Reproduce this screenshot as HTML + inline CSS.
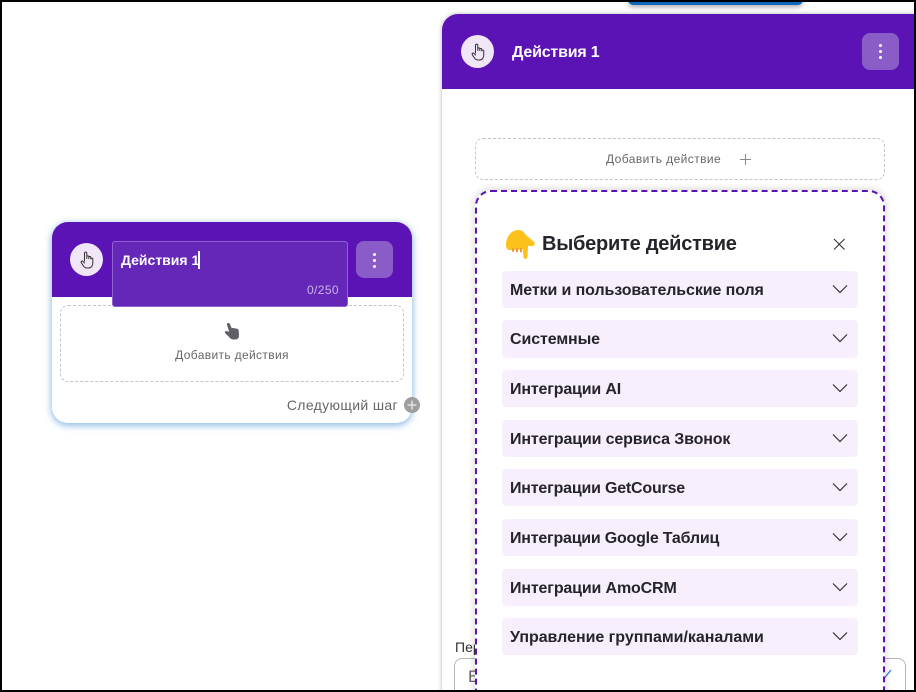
<!DOCTYPE html>
<html><head><meta charset="utf-8">
<style>
*{box-sizing:border-box;margin:0;padding:0}
html,body{width:916px;height:692px;overflow:hidden;background:#fff;font-family:"Liberation Sans",sans-serif}
.a{position:absolute}
#root{position:relative;width:916px;height:692px;overflow:hidden;background:#fff}
.frame{position:absolute;left:0;top:0;width:916px;height:692px;border:2px solid #000;pointer-events:none;z-index:50}
.circ{position:absolute;width:33px;height:33px;border-radius:50%;background:#f0e6f8}
.menu{position:absolute;width:37px;height:37px;border-radius:8px;background:#8a5cc7}
.menu i{position:absolute;left:17px;width:3px;height:3px;border-radius:50%;background:#fff}
.row{position:absolute;left:502px;width:356px;height:37px;background:#f7f0fc;border-radius:4px;font-weight:bold;font-size:16px;line-height:39px;letter-spacing:-.1px;padding-left:8px;color:#26242b;z-index:12;white-space:nowrap;overflow:hidden}
.row svg{position:absolute;left:329px;top:13px}
</style></head><body><div id="root">

<div class="a" style="left:628px;top:0;width:175px;height:5px;background:#0b68bd;border-radius:0 0 6px 6px;box-shadow:0 2px 5px rgba(0,0,0,.35)"></div>

<!-- Left card -->
<div class="a" style="left:52px;top:222px;width:360px;height:201px;border-radius:16px;background:#fff;box-shadow:0 2px 7px 1px rgba(80,150,220,.6)"></div>
<div class="a" style="left:52px;top:222px;width:360px;height:75px;border-radius:16px 16px 0 0;background:#5b13b5"></div>
<div class="circ" style="left:70px;top:243px"></div>
<svg class="a" style="left:78px;top:250px" width="20" height="20" viewBox="0 0 20 20" fill="none" stroke="#333" stroke-width="1" stroke-linejoin="round" stroke-linecap="round"><path d="M6.500 11V3.200c0-1.500 2.300-1.500 2.300 0V8.500M8.800 8V6.800c0-1.200 2-1.200 2 0V8.600M10.800 8V7.300c0-1.100 2-1.100 2 0V9M12.800 8.800c0-1 2-1 2 .2V13c0 3-1.800 5-4.300 5H9c-2 0-3-1-4-2.600L3.300 12.700c-.7-1.300 1-2.300 1.900-1.200L6.500 13"/></svg>

<div class="a" style="left:60px;top:305px;width:344px;height:77px;border:1px dashed #c4c4c4;border-radius:8px"></div>
<svg class="a" style="left:223px;top:322px" width="20" height="20" viewBox="0 0 20 20" fill="#5f5f66"><path d="M4.500 1.200c1-.6 1.900-.2 2.300.7L8.700 6.200l1-.3 1 .4 1-.2 1 .5 1.300 0c1.200.3 1.700 1.200 1.700 2.300L16 14c0 2-1.500 3.500-3.500 3.500h-2C9 17.500 8 17 7 16L2.300 11.200c-.8-1-.1-2.300 1-2.200L6.200 9.800 4 2.800c-.1-.6 0-1.300.5-1.600z"/></svg>
<div class="a" style="left:60px;top:348px;width:344px;text-align:center;font-size:12px;line-height:15px;letter-spacing:.35px;color:#666">Добавить действия</div>
<div class="a" style="right:518px;top:397px;font-size:14px;line-height:17px;color:#666;letter-spacing:.35px;white-space:nowrap">Следующий шаг</div>
<div class="a" style="left:404px;top:397px;width:16px;height:16px;border-radius:50%;background:#9e9e9e"></div>
<svg class="a" style="left:404px;top:397px" width="16" height="16" stroke="#e4e4e4" stroke-width="1.500"><path d="M8 3.500v9M3.500 8h9"/></svg>

<div class="a" style="left:112px;top:241px;width:236px;height:66px;border-radius:3px;background:#6527b8;border:1px solid #8f60d0"></div>
<div class="a" style="left:121px;top:252px;font-weight:bold;font-size:14px;line-height:16px;color:#fff;white-space:nowrap">Действия 1</div>
<div class="a" style="left:198px;top:251px;width:2px;height:18px;background:#fff"></div>
<div class="a" style="right:577px;top:283px;font-size:12px;line-height:14px;letter-spacing:.4px;color:#c9b3e6">0/250</div>
<div class="menu" style="left:356px;top:241px"><i style="top:12px"></i><i style="top:18px"></i><i style="top:24px"></i></div>

<!-- Right panel -->
<div class="a" style="left:442px;top:14px;width:474px;height:678px;border-radius:16px 0 0 0;background:#fff;box-shadow:0 0 5px rgba(0,0,0,.3)"></div>
<div class="a" style="left:442px;top:14px;width:474px;height:75px;border-radius:16px 0 0 0;background:#5b13b5"></div>
<div class="circ" style="left:461px;top:35px"></div>
<svg class="a" style="left:469px;top:42px" width="20" height="20" viewBox="0 0 20 20" fill="none" stroke="#333" stroke-width="1" stroke-linejoin="round" stroke-linecap="round"><path d="M6.500 11V3.200c0-1.500 2.300-1.500 2.300 0V8.500M8.800 8V6.800c0-1.200 2-1.200 2 0V8.600M10.800 8V7.300c0-1.100 2-1.100 2 0V9M12.800 8.800c0-1 2-1 2 .2V13c0 3-1.800 5-4.300 5H9c-2 0-3-1-4-2.600L3.300 12.700c-.7-1.300 1-2.300 1.900-1.200L6.500 13"/></svg>
<div class="a" style="left:512px;top:44px;font-weight:bold;font-size:16px;line-height:18px;letter-spacing:-.2px;color:#fff;white-space:nowrap">Действия 1</div>
<div class="menu" style="left:862px;top:33px"><i style="top:11px"></i><i style="top:17px"></i><i style="top:23px"></i></div>

<div class="a" style="left:475px;top:138px;width:410px;height:42px;border:1px dashed #c4c4c4;border-radius:8px"></div>
<div class="a" style="left:606px;top:152px;font-size:12px;line-height:14px;letter-spacing:.42px;color:#666;white-space:nowrap">Добавить действие</div>
<svg class="a" style="left:739px;top:153px" width="13" height="13" stroke="#8a8a8a" stroke-width="1.100"><path d="M6.500 1v11M1 6.500h11"/></svg>

<div class="a" style="left:455px;top:639px;font-size:14px;line-height:16px;color:#333">Пер</div>
<div class="a" style="left:454px;top:658px;width:452px;height:34px;border:1px solid #b5b5b5;border-bottom:none;border-radius:8px 8px 0 0;background:#fff"></div>
<div class="a" style="left:468px;top:667px;font-size:17px;line-height:20px;color:#666">Б</div>
<svg class="a" style="left:879px;top:668px" width="14" height="12" fill="none" stroke="#2f7fd0" stroke-width="1.200"><path d="M2 8l3 2.500L12 2"/></svg>

<!-- Selection card -->
<div class="a" style="left:475px;top:190px;width:410px;height:502px;border-radius:16px 16px 0 0;background:#fff;border:2px dashed #5b13b5;border-bottom:none;box-shadow:0 0 6px 2px rgba(0,0,0,.13);z-index:10"></div>
<svg class="a" style="left:505px;top:228px;z-index:12" width="32" height="33" viewBox="0 0 32 33"><path d="M1 17C1 8 7 2 13 2c4 0 6 2 8 5l7 6c3 2 2 5-1 5h-4l-.500 11c-.5 2.500-3.500 2.500-4 0L18 21.500 5 22c-3 0-4-2-4-5z" fill="#fcc21b"/><rect x="7" y="20" width="2" height="4" rx="1" fill="#f19534"/><rect x="11" y="20" width="2" height="4.500" rx="1" fill="#f19534"/><rect x="15" y="20" width="2" height="4.500" rx="1" fill="#f19534"/></svg>
<div class="a" style="left:542px;top:232px;font-weight:bold;font-size:20px;line-height:24px;letter-spacing:-.24px;color:#26242b;white-space:nowrap;z-index:12">Выберите действие</div>
<svg class="a" style="left:832px;top:237px;z-index:12" width="14" height="14" stroke="#333" stroke-width="1.100"><path d="M2 2l10.500 10.500M12.500 2L2 12.500"/></svg>

<div class="row" style="top:271px">Метки и пользовательские поля<svg width="18" height="10" fill="none" stroke="#333" stroke-width="1.200"><path d="M2 1.500l7 7 7-7"/></svg></div>
<div class="row" style="top:320px;height:38px;line-height:40px">Системные<svg width="18" height="10" fill="none" stroke="#333" stroke-width="1.200"><path d="M2 1.500l7 7 7-7"/></svg></div>
<div class="row" style="top:370px;letter-spacing:-.17px">Интеграции AI<svg width="18" height="10" fill="none" stroke="#333" stroke-width="1.200"><path d="M2 1.500l7 7 7-7"/></svg></div>
<div class="row" style="top:420px;letter-spacing:-.14px">Интеграции сервиса Звонок<svg width="18" height="10" fill="none" stroke="#333" stroke-width="1.200"><path d="M2 1.500l7 7 7-7"/></svg></div>
<div class="row" style="top:469px;letter-spacing:-.2px">Интеграции GetCourse<svg width="18" height="10" fill="none" stroke="#333" stroke-width="1.200"><path d="M2 1.500l7 7 7-7"/></svg></div>
<div class="row" style="top:519px;letter-spacing:-.22px">Интеграции Google Таблиц<svg width="18" height="10" fill="none" stroke="#333" stroke-width="1.200"><path d="M2 1.500l7 7 7-7"/></svg></div>
<div class="row" style="top:569px;letter-spacing:-.15px">Интеграции AmoCRM<svg width="18" height="10" fill="none" stroke="#333" stroke-width="1.200"><path d="M2 1.500l7 7 7-7"/></svg></div>
<div class="row" style="top:618px;letter-spacing:-.03px">Управление группами/каналами<svg width="18" height="10" fill="none" stroke="#333" stroke-width="1.200"><path d="M2 1.500l7 7 7-7"/></svg></div>

<div class="frame"></div>
</div></body></html>
